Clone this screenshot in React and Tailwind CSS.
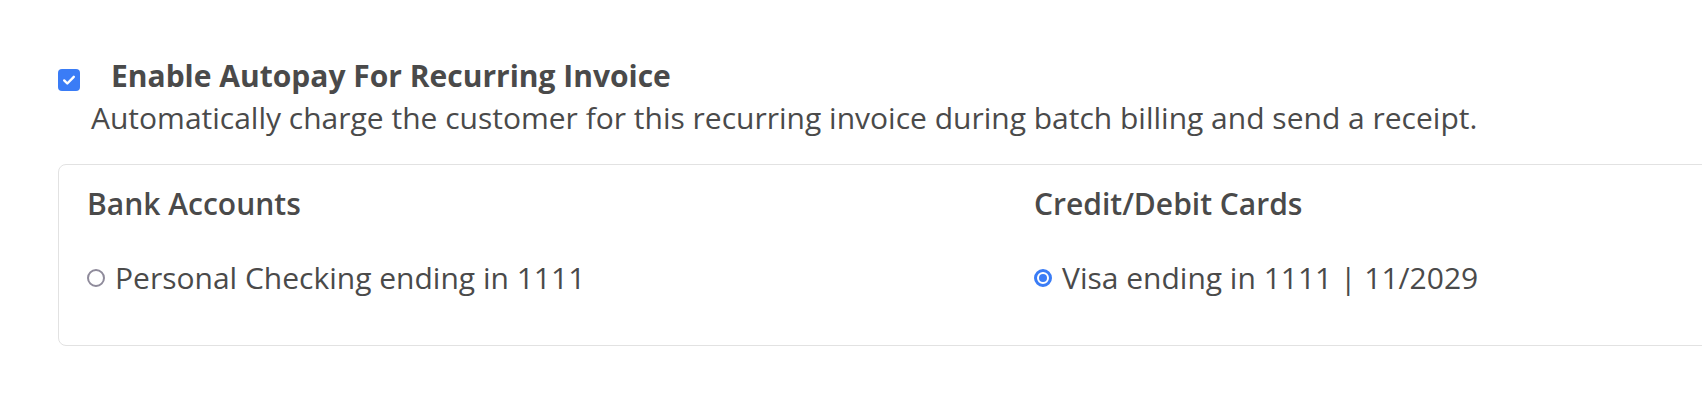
import { useState } from 'react'

const bankAccounts = [{ id: 'bank-1', label: 'Personal Checking ending in 1111' }]
const cards = [{ id: 'card-1', label: 'Visa ending in 1111 | 11/2029' }]

function Radio({ checked }) {
  if (checked) {
    return (
      <span className="flex h-[18px] w-[18px] shrink-0 items-center justify-center rounded-full border-[3px] border-[#3a7cf6] bg-white">
        <span className="h-[8px] w-[8px] rounded-full bg-[#3a7cf6]" />
      </span>
    )
  }
  return <span className="h-[18px] w-[18px] shrink-0 rounded-full border-[2.5px] border-[#8f8b9b] bg-white" />
}

function MethodColumn({ title, items, selected, onSelect }) {
  return (
    <div>
      <h3 className="font-semibold">{title}</h3>
      <div className="mt-[32px] flex flex-col">
        {items.map((item) => (
          <label key={item.id} className="flex cursor-pointer items-center gap-[10px]" onClick={() => onSelect(item.id)}>
            <Radio checked={selected === item.id} />
            <span>{item.label}</span>
          </label>
        ))}
      </div>
    </div>
  )
}

export default function App() {
  const [enabled, setEnabled] = useState(true)
  const [selected, setSelected] = useState('card-1')

  return (
    <div className="min-h-[414px] w-full overflow-hidden bg-white">
      <div className="pl-[58px] pt-[55px] text-[30px] leading-[42px] text-[#4a4a4a]" style={{ fontFamily: '"Open Sans", sans-serif' }}>
        <div className="flex items-start">
          <button
            type="button"
            onClick={() => setEnabled(!enabled)}
            className={`mt-[14px] flex h-[22px] w-[22px] shrink-0 items-center justify-center rounded-[4px] ${enabled ? 'bg-[#3a7cf6]' : 'border-2 border-[#8f8b9b] bg-white'}`}
          >
            {enabled && (
              <svg width="16" height="16" viewBox="0 0 16 16" fill="none">
                <path d="M3.2 8.4l3.1 3.1L12.8 4.8" stroke="white" strokeWidth="2.4" strokeLinecap="round" strokeLinejoin="round" />
              </svg>
            )}
          </button>
          <span className="ml-[31px] font-bold">Enable Autopay For Recurring Invoice</span>
        </div>
        <p className="pl-[33px]">Automatically charge the customer for this recurring invoice during batch billing and send a receipt.</p>

        <div className="mt-[25px] grid w-[1952px] grid-cols-2 rounded-[8px] border border-[#e2e2e2] pb-[46px] pl-[28px] pr-[28px] pt-[18px]">
          <MethodColumn title="Bank Accounts" items={bankAccounts} selected={selected} onSelect={setSelected} />
          <MethodColumn title="Credit/Debit Cards" items={cards} selected={selected} onSelect={setSelected} />
        </div>
      </div>
    </div>
  )
}
